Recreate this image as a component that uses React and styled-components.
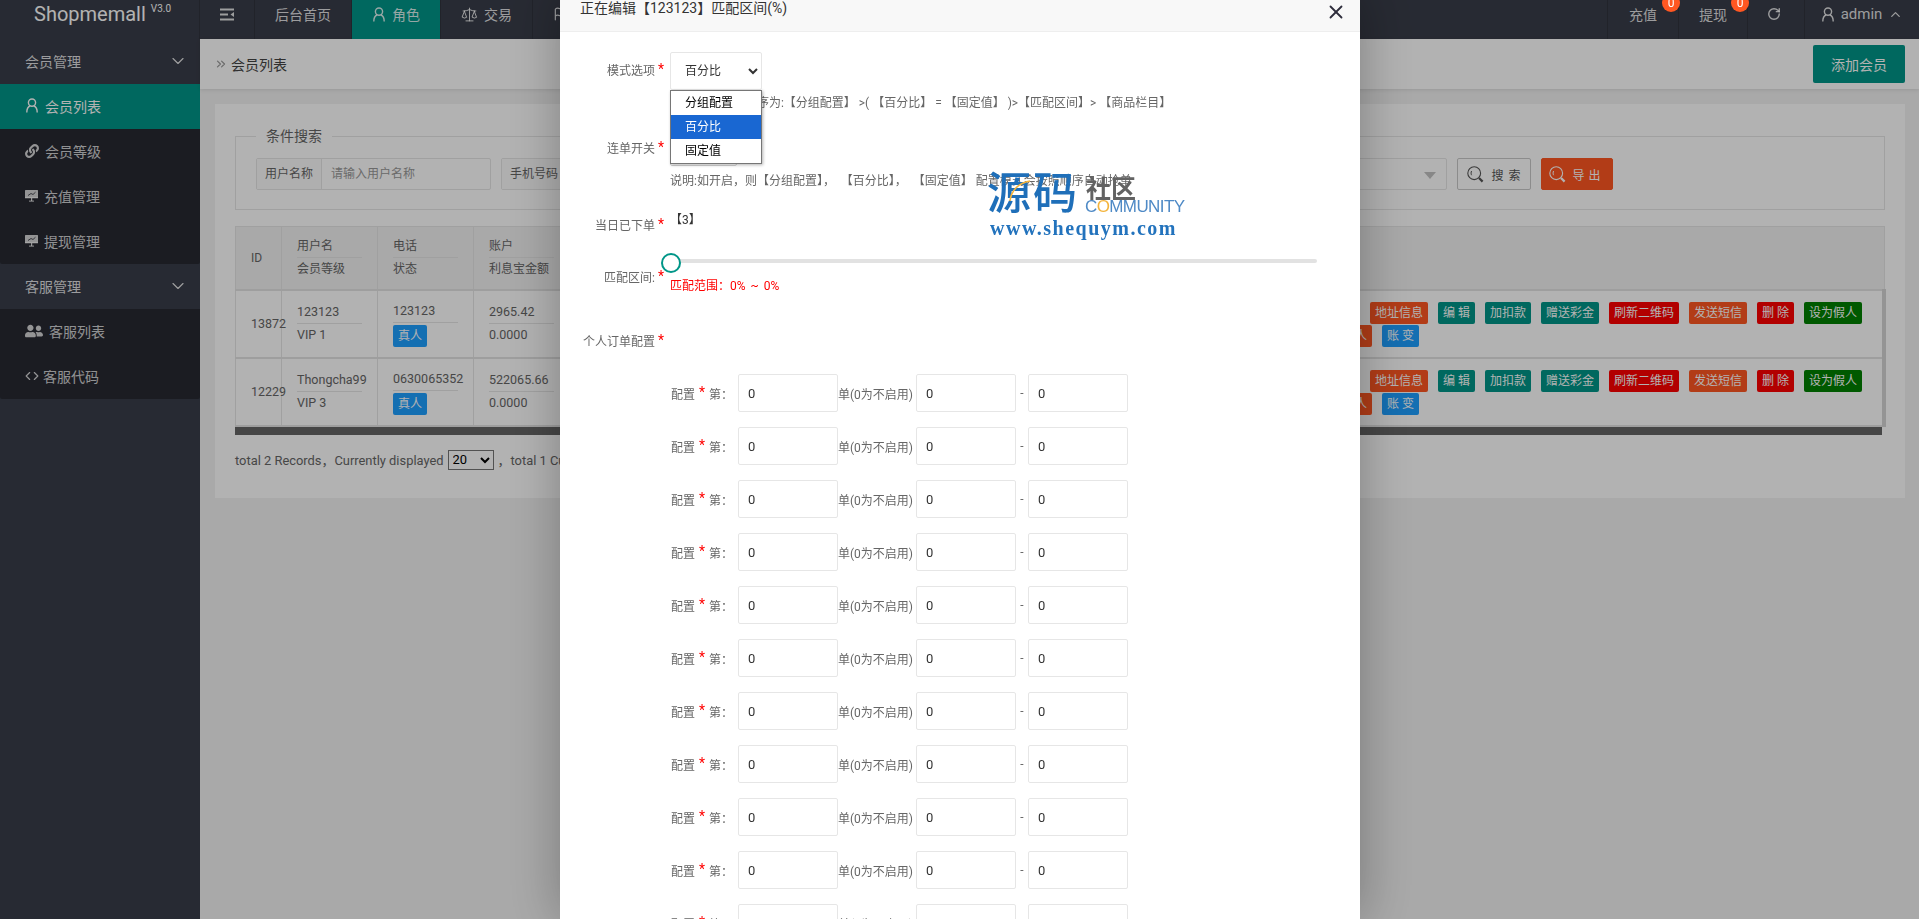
import styled, { createGlobalStyle } from "styled-components";
import { ChevronDown, ChevronUp, ChevronsRight, Code, Flag, RotateCw, Scale, X } from "lucide-react";
import { FaLink, FaUserFriends } from "react-icons/fa";

const GlobalStyle = createGlobalStyle`
  html, body {
    margin: 0;
    height: 100%;
    overflow: hidden;
    background: #f2f2f2;
    font-family: Roboto, "Noto Sans CJK SC", sans-serif;
    font-size: 14px;
    color: #666;
  }
  * { box-sizing: border-box; }
`;

const Shell = styled.div`
  height: 919px;
  display: flex;
  flex-direction: column;
`;

const Header = styled.header`
  height: 39px;
  flex: none;
  display: flex;
  background: #393d49;
  color: rgba(255, 255, 255, 0.85);
`;

const Logo = styled.div`
  width: 200px;
  padding: 1px 0 0 34px;
  font-size: 20px;
  line-height: 26px;
  color: #fff;
  border-right: 1px solid #30333d;
  sup {
    font-size: 10px;
    line-height: 10px;
    margin-left: 5px;
    vertical-align: 9px;
  }
`;

const NavItem = styled.div`
  position: relative;
  display: flex;
  align-items: center;
  gap: 6px;
  height: 39px;
  padding: 0 20px 11px;
  background: ${(p) => (p.$active ? "#009688" : "transparent")};
  border-right: 1px solid #30333d;
  white-space: nowrap;
  svg { flex: none; }
`;

const NavSpacer = styled.div`
  flex: 1;
`;

const RightItem = styled(NavItem)`
  width: ${(p) => p.$width}px;
  flex: none;
  padding: 0 ${(p) => p.$trim || 0}px 11px 0;
  justify-content: center;
  border-right: 0;
  border-left: 1px solid #30333d;
`;

const AdminName = styled.span`
  font-size: 15px;
`;

const Badge = styled.span`
  position: absolute;
  top: -6px;
  right: -2px;
  z-index: 1;
  width: 18px;
  height: 18px;
  border-radius: 50%;
  background: #ff5722;
  color: #fff;
  font-size: 12px;
  line-height: 18px;
  text-align: center;
`;

const Body = styled.div`
  flex: 1;
  display: flex;
  min-height: 0;
`;

const Sidebar = styled.aside`
  width: 200px;
  flex: none;
  background: #393d49;
  color: rgba(255, 255, 255, 0.8);
`;

const GroupTitle = styled.div`
  height: 45px;
  display: flex;
  align-items: center;
  justify-content: space-between;
  padding: 0 12px 2px 25px;
  color: rgba(255, 255, 255, 0.85);
`;

const SideList = styled.div`
  background: #282932;
  border-radius: 0 0 2px 2px;
`;

const SideItem = styled.div`
  height: 45px;
  display: flex;
  align-items: center;
  gap: ${(p) => p.$gap || 6}px;
  padding: 0 0 2px 25px;
  background: ${(p) => (p.$active ? "#009688" : "transparent")};
  color: ${(p) => (p.$active ? "#fff" : "rgba(255, 255, 255, 0.8)")};
`;

const Main = styled.main`
  flex: 1;
  min-width: 0;
`;

const CrumbBar = styled.div`
  height: 50px;
  display: flex;
  align-items: center;
  padding: 0 14px 0 14px;
  background: #fff;
  box-shadow: 0 1px 4px rgba(0, 0, 0, 0.1);
  color: #444;
  font-size: 14px;
  gap: 3px;
  svg { color: #999; }
`;

const AddButton = styled.button`
  margin-left: auto;
  width: 92px;
  height: 38px;
  border: 0;
  border-radius: 2px;
  background: #009688;
  color: #fff;
  font: inherit;
`;

const Card = styled.section`
  margin: 15px 14px 0 15px;
  height: 394px;
  padding: 25px 20px 0;
  background: #fff;
`;

const FieldSet = styled.fieldset`
  margin: 0;
  height: 81px;
  padding: 0 0 0 20px;
  border: 1px solid #e6e6e6;
  display: flex;
  position: relative;
  legend {
    margin-left: 0;
    padding: 0 10px;
    color: #666;
    line-height: 1;
    height: 14px;
  }
`;

const SearchRow = styled.div`
  display: flex;
  gap: 10px;
  margin-top: 15px;
`;

const InputGroup = styled.div`
  width: ${(p) => p.$width || 235}px;
  height: 32px;
  display: flex;
  border: 1px solid #e6e6e6;
  border-radius: 2px;
  font-size: 12px;
  line-height: 30px;
  background: #fff;
  label {
    width: 65px;
    flex: none;
    text-align: center;
    background: #fbfbfb;
    border-right: 1px solid #e6e6e6;
    color: #666;
  }
  span {
    padding-left: 9px;
    color: #999;
  }
`;

const SelectBox = styled.div`
  width: ${(p) => p.$width}px;
  height: 32px;
  position: relative;
  border: 1px solid #e6e6e6;
  border-radius: 2px;
  &::after {
    content: "";
    position: absolute;
    right: 10px;
    top: 13px;
    border: 6px solid transparent;
    border-top: 7px solid #c2c2c2;
    border-bottom: 0;
  }
`;

const SearchButton = styled.button`
  height: 32px;
  width: ${(p) => p.$width}px;
  display: flex;
  align-items: center;
  justify-content: center;
  gap: ${(p) => p.$gap}px;
  padding: 0;
  border: 1px solid ${(p) => (p.$danger ? "#ff5722" : "#c9c9c9")};
  border-radius: 2px;
  background: ${(p) => (p.$danger ? "#ff5722" : "#fff")};
  color: ${(p) => (p.$danger ? "#fff" : "#555")};
  font: inherit;
  font-size: 12px;
  letter-spacing: ${(p) => p.$spacing}px;
`;

const TableWrap = styled.div`
  margin-top: 16px;
  width: 1651px;
`;

const Table = styled.table`
  width: 100%;
  table-layout: fixed;
  border-collapse: collapse;
  th, td {
    padding: 0 0 0 15px;
    border: 1px solid #e6e6e6;
    font-weight: 400;
    text-align: left;
    color: #666;
  }
  thead th {
    height: 63px;
    background: #f2f2f2;
    border-bottom: 2px solid #e2e2e2;
    font-size: 12px;
  }
  tbody td {
    height: 68px;
    border-bottom: 2px solid #e2e2e2;
    white-space: nowrap;
    font-size: 12.5px;
  }
  tbody td:last-child {
    padding: 2px 0 0;
    border-right: 4px solid #d5d5d5;
  }
`;

const Stack = styled.div`
  width: 65px;
  line-height: 22px;
  white-space: nowrap;
`;

const StackTop = styled.div`
  border-bottom: 1px solid #e6e6e6;
  margin-bottom: ${(p) => (p.$tight ? 2 : 0)}px;
`;

const Tag = styled.span`
  display: block;
  width: fit-content;
  height: 22px;
  padding: 0 5px;
  border-radius: 2px;
  background: ${(p) => p.$bg};
  color: #fff;
  font-size: 12px;
  line-height: 22px;
  white-space: pre;
`;

const ActionLine = styled.div`
  display: flex;
  gap: 10px;
  margin-left: ${(p) => p.$indent}px;
  & + & { margin-top: 1px; }
`;

const ScrollBar = styled.div`
  height: 8px;
  width: 1647px;
  background: #656565;
`;

const Pager = styled.div`
  margin-top: 15px;
  display: flex;
  align-items: center;
  color: #666;
  height: 20px;
  font-size: 12.9px;
  select {
    width: 46px;
    height: 20px;
    margin: 0 4px;
    font: inherit;
    color: #000;
    background: #fff;
  }
`;

const Shade = styled.div`
  position: fixed;
  inset: 0;
  background: rgba(0, 0, 0, 0.3);
`;

const Modal = styled.div`
  position: fixed;
  top: -10px;
  left: 560px;
  width: 800px;
  bottom: 0;
  display: flex;
  flex-direction: column;
  background: #fff;
  box-shadow: 1px 1px 50px rgba(0, 0, 0, 0.3);
`;

const ModalTitle = styled.div`
  height: 42px;
  flex: none;
  padding-left: 20px;
  background: #f8f8f8;
  border-bottom: 1px solid #eee;
  color: #333;
  font-size: 14px;
  line-height: 37px;
  svg {
    position: absolute;
    top: 11px;
    right: 13px;
    color: #2e2d3c;
  }
`;

const ModalBody = styled.div`
  flex: 1;
  min-height: 0;
  overflow-y: scroll;
  position: relative;
  padding: 20px 0 46px;
  font-size: 12px;
  color: #666;
  &::-webkit-scrollbar { width: 3px; }
  &::-webkit-scrollbar-track { background: #ccc; }
  &::-webkit-scrollbar-thumb { background: #666; }
`;

const FormRow = styled.div`
  display: flex;
  align-items: flex-start;
  position: relative;
  margin-top: ${(p) => p.$top || 0}px;
`;

const FieldLabel = styled.label`
  width: 95px;
  flex: none;
  text-align: right;
  line-height: 18px;
  margin-top: ${(p) => p.$top || 0}px;
  color: #666;
`;

const Star = styled.span`
  width: ${(p) => p.$width || 15}px;
  flex: none;
  padding-left: ${(p) => p.$pad ?? 3}px;
  margin-top: ${(p) => p.$top || 0}px;
  margin-bottom: ${(p) => p.$lift || 0}px;
  color: #f00;
  font-size: 14px;
  line-height: 14px;
`;

const ModeSelect = styled.select`
  width: 92px;
  height: 38px;
  padding-left: 10px;
  border: 1px solid #e6e6e6;
  border-radius: 2px;
  background: #fff;
  color: #333;
  font: inherit;
`;

const OptionList = styled.ul`
  position: absolute;
  top: 38px;
  left: 110px;
  z-index: 2;
  width: 92px;
  margin: 0;
  padding: 0;
  list-style: none;
  background: #fff;
  border: 1px solid #767676;
  box-shadow: 1px 1px 3px rgba(0, 0, 0, 0.3);
  color: #000;
`;

const Option = styled.li`
  height: 24px;
  padding-left: 14px;
  line-height: 24px;
  background: ${(p) => (p.$selected ? "#1967d2" : "transparent")};
  color: ${(p) => (p.$selected ? "#fff" : "#000")};
`;

const Note = styled.p`
  margin: ${(p) => p.$top}px 0 0 110px;
  line-height: 18px;
  color: #666;
  white-space: pre;
`;

const SwitchBox = styled.div`
  width: 67px;
  height: 22px;
  margin-top: 4px;
  background: #fff;
  border: 1px solid #d2d2d2;
  border-radius: 2px;
`;

const DayCount = styled.span`
  line-height: 18px;
  color: #333;
`;

const Slider = styled.div`
  position: relative;
  margin: 24px 0 0 110px;
  width: 647px;
  height: 4px;
  background: #e2e2e2;
  border-radius: 3px;
  &::before {
    content: "";
    position: absolute;
    left: -9px;
    top: -6px;
    width: 16px;
    height: 16px;
    background: #fff;
    border: 2px solid #009688;
    border-radius: 50%;
  }
`;

const RangeText = styled.span`
  margin-top: 8px;
  line-height: 18px;
  color: #f00;
  word-spacing: 2px;
`;

const ConfigTitle = styled.div`
  display: flex;
  margin: 38px 0 23px 23px;
  line-height: 18px;
  color: #666;
`;

const ConfigRow = styled.div`
  display: flex;
  align-items: center;
  margin: 0 0 15px 111px;
`;

const ConfigLabel = styled.span`
  width: 67px;
  flex: none;
  display: flex;
  align-items: center;
  white-space: nowrap;
`;

const NumberInput = styled.input`
  width: 100px;
  height: 38px;
  padding: 0 0 0 9px;
  border: 1px solid #e6e6e6;
  border-radius: 2px;
  color: #333;
  font: 13px Roboto, sans-serif;
  outline: 0;
`;

const Unit = styled.span`
  width: 78px;
  flex: none;
  white-space: nowrap;
`;

const Dash = styled.span`
  width: 12px;
  text-align: center;
`;

const Watermark = styled.div`
  position: absolute;
  left: 430px;
  top: 178px;
  width: 200px;
  height: 72px;
  pointer-events: none;
`;

const WmBig = styled.span`
  position: absolute;
  left: -3px;
  top: -2px;
  font: 500 44px/48px "Noto Sans CJK SC", sans-serif;
  letter-spacing: 2px;
  color: #1f6fb9;
`;

const WmArc = styled.svg`
  position: absolute;
  left: 18px;
  top: 12px;
`;

const WmSmall = styled.span`
  position: absolute;
  left: 96px;
  top: 5px;
  font: 700 25px/28px "Noto Sans CJK SC", sans-serif;
  color: #636363;
`;

const WmCommunity = styled.span`
  position: absolute;
  left: 95px;
  top: 29px;
  font: 400 17px/20px "Liberation Sans", sans-serif;
  letter-spacing: -0.6px;
  color: #4f8ac6;
  b { font-weight: 400; color: #f4b43c; }
`;

const WmUrl = styled.span`
  position: absolute;
  left: 0;
  top: 50px;
  font: 700 20px/20px "Liberation Serif", serif;
  letter-spacing: 1.5px;
  color: #2373bd;
`;

const UserIcon = ({ size = 14 }) => (
  <svg width={size} height={size + 1} viewBox="0 0 14 15" fill="none" stroke="currentColor" strokeWidth="1.4">
    <circle cx="7" cy="4.6" r="3.6" />
    <path d="M5 8 C2.8 9 1.8 11.5 1.8 14.4 M9 8 C11.2 9 12.2 11.5 12.2 14.4" />
  </svg>
);

const MenuIcon = () => (
  <svg width="14" height="13" viewBox="0 0 14 13" fill="currentColor">
    <rect x="0" y="0.5" width="14" height="2" />
    <rect x="0" y="5.5" width="8" height="2" />
    <path d="M14 4 L10.5 6.5 L14 9 Z" />
    <rect x="0" y="10.5" width="14" height="2" />
  </svg>
);

const ScreenIcon = () => (
  <svg width="13" height="13" viewBox="0 0 13 13" fill="currentColor">
    <rect x="0" y="1" width="13" height="8" rx="0.5" />
    <rect x="0" y="8" width="13" height="1.4" opacity="0.7" />
    <rect x="6" y="9" width="1.2" height="3" />
    <rect x="4" y="11.6" width="5" height="1" />
    <path d="M3 6.5 L6 4.5 L8 5.5 L10.5 3.2" stroke="#282932" strokeWidth="0.8" fill="none" />
  </svg>
);

const SearchIcon = ({ size = 17 }) => (
  <svg width={size} height={size} viewBox="0 0 17 17" fill="none" stroke="currentColor">
    <circle cx="7.2" cy="7.2" r="6.4" strokeWidth="1.1" />
    <path d="M4.6 5 C3.9 6.2 3.9 8 4.6 9.2" strokeWidth="1" />
    <path d="M12 12 L15.6 15.6" strokeWidth="2.2" />
  </svg>
);

const actions = [
  ["地址信息", "#ff5722"],
  ["编 辑", "#009688"],
  ["加扣款", "#009688"],
  ["赠送彩金", "#009688"],
  ["刷新二维码", "#ff0000"],
  ["发送短信", "#ff5722"],
  ["删 除", "#ff0000"],
  ["设为假人", "#008000"],
];

const rows = [
  { id: "13872", name: "123123", level: "VIP 1", phone: "123123", money: "2965.42" },
  { id: "12229", name: "Thongcha99", level: "VIP 3", phone: "0630065352", money: "522065.66" },
];

const configRows = Array.from({ length: 20 }, (_, i) => i);

const App = () => (
  <>
    <GlobalStyle />
    <Shell>
      <Header>
        <Logo>
          Shopmemall<sup>V3.0</sup>
        </Logo>
        <NavItem>
          <MenuIcon />
        </NavItem>
        <NavItem>后台首页</NavItem>
        <NavItem $active>
          <UserIcon />
          角色
        </NavItem>
        <NavItem>
          <Scale size={17} strokeWidth={1.4} />
          交易
        </NavItem>
        <NavItem>
          <Flag size={14} />
          产品
        </NavItem>
        <NavSpacer />
        <RightItem $width={71}>
          充值
          <Badge>0</Badge>
        </RightItem>
        <RightItem $width={69}>
          提现
          <Badge>0</Badge>
        </RightItem>
        <RightItem $width={57} $trim={4}>
          <RotateCw size={14} strokeWidth={2.4} />
        </RightItem>
        <RightItem $width={115}>
          <UserIcon />
          <AdminName>admin</AdminName>
          <ChevronUp size={15} />
        </RightItem>
      </Header>
      <Body>
        <Sidebar>
          <GroupTitle>
            会员管理
            <ChevronDown size={20} strokeWidth={1.4} />
          </GroupTitle>
          <SideList>
            <SideItem $active>
              <UserIcon />
              会员列表
            </SideItem>
            <SideItem>
              <FaLink size={14} />
              会员等级
            </SideItem>
            <SideItem>
              <ScreenIcon />
              充值管理
            </SideItem>
            <SideItem>
              <ScreenIcon />
              提现管理
            </SideItem>
          </SideList>
          <GroupTitle>
            客服管理
            <ChevronDown size={20} strokeWidth={1.4} />
          </GroupTitle>
          <SideList>
            <SideItem>
              <FaUserFriends size={18} />
              客服列表
            </SideItem>
            <SideItem $gap={4}>
              <Code size={14} />
              客服代码
            </SideItem>
          </SideList>
        </Sidebar>
        <Main>
          <CrumbBar>
            <ChevronsRight size={14} />
            会员列表
            <AddButton>添加会员</AddButton>
          </CrumbBar>
          <Card>
            <FieldSet>
              <legend>条件搜索</legend>
              <SearchRow>
                <InputGroup>
                  <label>用户名称</label>
                  <span>请输入用户名称</span>
                </InputGroup>
                <InputGroup>
                  <label>手机号码</label>
                  <span>请输入手机号码</span>
                </InputGroup>
                <InputGroup>
                  <label>邀请码</label>
                  <span>请输入邀请码</span>
                </InputGroup>
                <InputGroup>
                  <label>会员等级</label>
                </InputGroup>
                <SelectBox $width={211} />
                <SearchButton $width={74} $gap={8} $spacing={1}>
                  <SearchIcon />
                  搜 索
                </SearchButton>
                <SearchButton $width={72} $danger $gap={6} $spacing={4}>
                  <SearchIcon />
                  导出
                </SearchButton>
              </SearchRow>
            </FieldSet>
            <TableWrap>
              <Table>
                <colgroup>
                  <col width="46" />
                  <col width="96" />
                  <col width="96" />
                  <col width="96" />
                  <col />
                </colgroup>
                <thead>
                  <tr>
                    <th>ID</th>
                    <th>
                      <Stack>
                        <StackTop>用户名</StackTop>
                        会员等级
                      </Stack>
                    </th>
                    <th>
                      <Stack>
                        <StackTop>电话</StackTop>
                        状态
                      </Stack>
                    </th>
                    <th>
                      <Stack>
                        <StackTop>账户</StackTop>
                        利息宝金额
                      </Stack>
                    </th>
                    <th />
                  </tr>
                </thead>
                <tbody>
                  {rows.map((row) => (
                    <tr key={row.id}>
                      <td>{row.id}</td>
                      <td>
                        <Stack>
                          <StackTop>{row.name}</StackTop>
                          {row.level}
                        </Stack>
                      </td>
                      <td>
                        <Stack>
                          <StackTop $tight>{row.phone}</StackTop>
                          <Tag $bg="#1e9fff">真人</Tag>
                        </Stack>
                      </td>
                      <td>
                        <Stack>
                          <StackTop>{row.money}</StackTop>
                          0.0000
                        </Stack>
                      </td>
                      <td>
                        <ActionLine $indent={800}>
                          {actions.map(([label, bg]) => (
                            <Tag key={label} $bg={bg}>
                              {label}
                            </Tag>
                          ))}
                        </ActionLine>
                        <ActionLine $indent={744}>
                          <Tag $bg="#ff5722">设为真人</Tag>
                          <Tag $bg="#1e9fff">账 变</Tag>
                        </ActionLine>
                      </td>
                    </tr>
                  ))}
                </tbody>
              </Table>
              <ScrollBar />
            </TableWrap>
            <Pager>
              {"total 2 Records\uFF0CCurrently displayed"}
              <select defaultValue="20">
                <option>20</option>
              </select>
              {"\uFF0Ctotal 1 Current page"}
            </Pager>
          </Card>
        </Main>
      </Body>
    </Shell>
    <Shade />
    <Modal>
      <ModalTitle>
        正在编辑【123123】匹配区间(%)
        <X size={22} strokeWidth={2} />
      </ModalTitle>
      <ModalBody>
        <FormRow>
          <FieldLabel $top={10}>模式选项</FieldLabel>
          <Star $top={10}>*</Star>
          <ModeSelect defaultValue="百分比">
            <option>分组配置</option>
            <option>百分比</option>
            <option>固定值</option>
          </ModeSelect>
          <OptionList>
            <Option>分组配置</Option>
            <Option $selected>百分比</Option>
            <Option>固定值</Option>
          </OptionList>
        </FormRow>
        <Note $top={4}>说明:模式优先顺序为:【分组配置】 &gt;( 【百分比】 = 【固定值】 )&gt;【匹配区间】&gt; 【商品栏目】</Note>
        <FormRow $top={28}>
          <FieldLabel>连单开关</FieldLabel>
          <Star>*</Star>
          <SwitchBox />
        </FormRow>
        <Note $top={6}>{"说明:如开启\uFF0C则【分组配置】\uFF0C  【百分比】\uFF0C  【固定值】 配置模式会按照顺序自动抢单"}</Note>
        <FormRow $top={21}>
          <FieldLabel $top={6}>当日已下单</FieldLabel>
          <Star $top={6}>*</Star>
          <DayCount>【3】</DayCount>
        </FormRow>
        <Slider />
        <FormRow $top={6}>
          <FieldLabel>匹配区间:</FieldLabel>
          <Star>*</Star>
          <RangeText>{"匹配范围\uFF1A0% ~ 0%"}</RangeText>
        </FormRow>
        <ConfigTitle>
          个人订单配置
          <Star>*</Star>
        </ConfigTitle>
        {configRows.map((i) => (
          <ConfigRow key={i}>
            <ConfigLabel>
              配置
              <Star $width={14} $pad={4} $lift={3}>
                *
              </Star>
              {"第\uFF1A"}
            </ConfigLabel>
            <NumberInput value="0" readOnly />
            <Unit>单(0为不启用)</Unit>
            <NumberInput value="0" readOnly />
            <Dash>-</Dash>
            <NumberInput value="0" readOnly />
          </ConfigRow>
        ))}
      </ModalBody>
      <Watermark>
        <WmBig>源码</WmBig>
        <WmArc width="24" height="22" viewBox="0 0 24 22" fill="none">
          <path d="M2 21 C3 11 10 3 22 1" stroke="#f4b43c" strokeWidth="1.6" />
        </WmArc>
        <WmSmall>社区</WmSmall>
        <WmCommunity>
          C<b>O</b>MMUNITY
        </WmCommunity>
        <WmUrl>www.shequym.com</WmUrl>
      </Watermark>
    </Modal>
  </>
);

export default App;
